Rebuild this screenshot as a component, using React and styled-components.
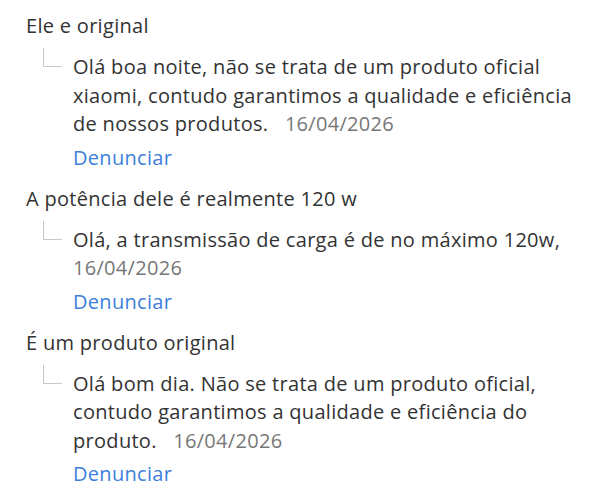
import React from 'react'
import styled, { createGlobalStyle } from 'styled-components'

const GlobalStyle = createGlobalStyle`
    html, body {
        margin: 0;
        padding: 0;
        background: #fff;
    }

    body {
        font-family: "Open Sans", Lato, "Liberation Sans", sans-serif;
        -webkit-font-smoothing: antialiased;
    }
`

const questions = [
    {
        question: 'Ele e original',
        answer: 'Olá boa noite, não se trata de um produto oficial xiaomi, contudo garantimos a qualidade e eficiência de nossos produtos.',
        date: '16/04/2026',
    },
    {
        question: 'A potência dele é realmente 120 w',
        answer: 'Olá, a transmissão de carga é de no máximo 120w,',
        date: '16/04/2026',
    },
    {
        question: 'É um produto original',
        answer: 'Olá bom dia. Não se trata de um produto oficial, contudo garantimos a qualidade e eficiência do produto.',
        date: '16/04/2026',
    },
]

const QuestionItem = ({ item }) => (
    <Item>
        <Question>{item.question}</Question>
        <AnswerRow>
            <Corner />
            <AnswerBody>
                <Answer>
                    {/* two no-break spaces keep the gap glued to the answer when the date wraps */}
                    {item.answer}{'\u00a0\u00a0 '}
                    <DateStamp>{item.date}</DateStamp>
                </Answer>
                <ReportLink href="#">Denunciar</ReportLink>
            </AnswerBody>
        </AnswerRow>
    </Item>
)

const App = () => (
    <>
        <GlobalStyle />
        <List>
            {questions.map(item => (
                <QuestionItem key={item.question} item={item} />
            ))}
        </List>
    </>
)

export default App

const List = styled.ul`
    list-style: none;
    margin: 0;
    padding: 12px 20px 0 26px;
    width: 610px;
    box-sizing: border-box;
    display: flex;
    flex-direction: column;
    gap: 13px;
`

const Item = styled.li`
    display: flex;
    flex-direction: column;
    gap: 13px;
`

const Question = styled.p`
    margin: 0;
    font-size: 20px;
    letter-spacing: 0.3px;
    line-height: 28px;
    color: #333;
`

const AnswerRow = styled.div`
    display: flex;
    align-items: flex-start;
`

const Corner = styled.span`
    flex: none;
    width: 18px;
    height: 18px;
    margin: -5px 11px 0 17px;
    border-left: 1px solid #c8c8c8;
    border-bottom: 1px solid #c8c8c8;
`

const AnswerBody = styled.div`
    display: flex;
    flex-direction: column;
    gap: 5px;
    align-items: flex-start;
`

const Answer = styled.p`
    margin: 0;
    font-size: 20px;
    letter-spacing: 0.3px;
    line-height: 28.5px;
    color: #333;
`

const DateStamp = styled.span`
    display: inline-block;
    color: #777;
`

const ReportLink = styled.a`
    font-size: 20px;
    letter-spacing: 0.3px;
    line-height: 28px;
    color: #3c7fdc;
    text-decoration: none;
`
